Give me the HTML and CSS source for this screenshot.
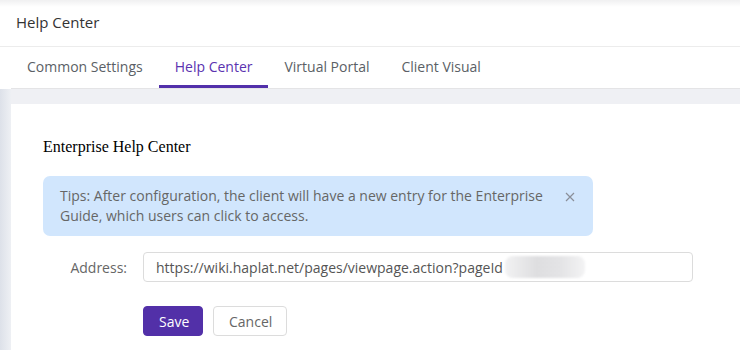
FILE: index.html
```html
<!DOCTYPE html>
<html lang="en">
<head>
    <meta charset="UTF-8">
    <meta name="viewport" content="width=device-width, initial-scale=1.0">
    <title>Help Center</title>
    <link rel="stylesheet" href="styles.css">
</head>
<body>
    <header class="page-header">Help Center</header>

    <nav class="tabs">
        <a class="tab">Common Settings</a>
        <a class="tab active">Help Center</a>
        <a class="tab">Virtual Portal</a>
        <a class="tab">Client Visual</a>
    </nav>

    <main class="content">
        <section class="card">
            <h3 class="card-title">Enterprise Help Center</h3>

            <div class="alert">
                <p>Tips: After configuration, the client will have a new entry for the Enterprise Guide, which users can click to access.</p>
                <button class="alert-close" aria-label="close">
                    <svg width="10" height="10" viewBox="0 0 10 10">
                        <path d="M1 1 L9 9 M9 1 L1 9" stroke="#8a8f99" stroke-width="1.2" fill="none"/>
                    </svg>
                </button>
            </div>

            <div class="form-row">
                <label class="form-label">Address:</label>
                <div class="input">
                    <span>https://wiki.haplat.net/pages/viewpage.action?pageId</span>
                    <span class="blurred"></span>
                </div>
            </div>

            <div class="form-actions">
                <button class="btn btn-primary">Save</button>
                <button class="btn btn-default">Cancel</button>
            </div>
        </section>
    </main>
</body>
</html>
```

FILE: styles.css
```css
* {
    box-sizing: border-box;
    margin: 0;
    padding: 0;
}

html, body {
    height: 100%;
}

body {
    font-family: 'Open Sans', 'Noto Sans', sans-serif;
    font-size: 14px;
    color: #555;
    background: #fff;
    display: flex;
    flex-direction: column;
    overflow: hidden;
}

.page-header {
    flex-shrink: 0;
    height: 47px;
    padding: 0 16px 2px;
    display: flex;
    align-items: center;
    font-size: 15px;
    color: #333;
    border-bottom: 1px solid #ececec;
    background: linear-gradient(#f0f0f1, #fff 7px);
}

.tabs {
    flex-shrink: 0;
    display: flex;
    margin-left: 11px;
    height: 42px;
    border-bottom: 1px solid #e4e4e6;
}

.tab {
    padding: 0 16px;
    display: flex;
    align-items: center;
    color: #5b5f66;
    border-bottom: 3px solid transparent;
    padding-top: 1px;
    cursor: pointer;
}

.tab.active {
    color: #5a33b0;
    border-bottom-color: #5230aa;
}

.content {
    flex: 1;
    padding: 15px 0 0 11px;
    background: linear-gradient(90deg, #dde1e9, #eef0f4 11px) left / 11px 100% no-repeat, #eff0f4;
}

.card {
    background: #fff;
    height: 100%;
    padding: 30px 32px;
}

.card-title {
    font-family: 'Liberation Serif', serif;
    font-weight: normal;
    font-size: 16px;
    color: #000;
    margin-top: 2px;
    line-height: 22px;
}

.alert {
    position: relative;
    width: 550px;
    margin-top: 18px;
    padding: 10px 50px 10px 17px;
    background: #d1e6fd;
    border-radius: 7px;
    color: #666;
    line-height: 20px;
}

.alert-close {
    position: absolute;
    top: 16px;
    right: 18px;
    background: transparent;
    border: none;
    cursor: pointer;
    display: flex;
}

.form-row {
    display: flex;
    align-items: center;
    margin-top: 16px;
}

.form-label {
    width: 100px;
    padding-right: 16px;
    text-align: right;
    color: #666;
}

.input {
    width: 550px;
    height: 30px;
    padding: 0 12px;
    border: 1px solid #dcdcdc;
    border-radius: 4px;
    display: flex;
    align-items: center;
    color: #555;
}

.blurred {
    width: 80px;
    height: 22px;
    margin-left: 2px;
    border-radius: 8px;
    background: linear-gradient(90deg, #f2f2f3, #dedee0 40%, #e4e4e6 70%, #f3f3f4);
    filter: blur(1px);
}

.form-actions {
    display: flex;
    gap: 10px;
    margin: 24px 0 0 100px;
}

.btn {
    height: 30px;
    padding: 0 15px;
    border-radius: 4px;
    font: inherit;
    cursor: pointer;
}

.btn-primary {
    width: 60px;
    background: #5230a8;
    border: 1px solid #5230a8;
    color: #fff;
}

.btn-default {
    width: 74px;
    background: #fff;
    border: 1px solid #dcdcdc;
    color: #666;
}
```
